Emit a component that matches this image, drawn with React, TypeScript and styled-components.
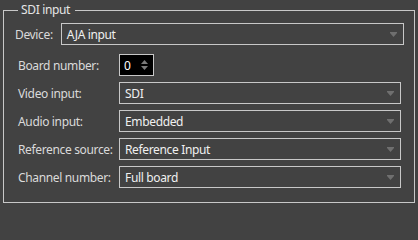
import React from 'react'
import styled, {createGlobalStyle} from 'styled-components'

const GlobalStyle = createGlobalStyle`
    html, body {
        margin: 0;
        padding: 0;
        background: #424242;
        overflow: hidden;
    }
    body {
        font-family: "Noto Sans", "Open Sans", sans-serif;
        font-size: 12px;
        letter-spacing: -0.35px;
        color: #dcdcdc;
    }
`

const Page = styled.div`
    width: 418px;
    height: 205px;
    padding: 2px 3px 0 3px;
    box-sizing: border-box;
`

const Group = styled.fieldset`
    margin: 0;
    padding: 5px 10px 12px 11px;
    height: 201px;
    box-sizing: border-box;
    border: 1px solid #c8c8c8;
    min-width: 0;
`

const Legend = styled.legend`
    padding: 0 5px 0 3px;
    margin-left: 3px;
    line-height: 16px;
    color: #e6e6e6;
`

const TopRow = styled.div`
    display: flex;
    align-items: center;
    gap: 8px;
    margin-bottom: 9px;
`

const Form = styled.div`
    display: grid;
    grid-template-columns: 95px 1fr;
    column-gap: 6px;
    row-gap: 6px;
    margin: 0 3px;
    align-items: center;
`

const Label = styled.span`
    white-space: nowrap;
    color: #dadada;
`

const ComboBox = styled.div`
    flex: 1;
    display: flex;
    align-items: center;
    justify-content: space-between;
    height: 22px;
    box-sizing: border-box;
    border: 1px solid #c8c8c8;
    padding: 0 6px 0 5px;
    color: #f0f0f0;
`

const SpinBox = styled.div`
    display: flex;
    align-items: center;
    justify-content: space-between;
    width: 35px;
    height: 22px;
    box-sizing: border-box;
    border: 1px solid #c8c8c8;
    background: #000;
    color: #ffffff;
    padding: 0 5px 0 4px;
`

const Arrows = styled.div`
    display: flex;
    flex-direction: column;
    gap: 2px;
`

function DropArrow() {
    return (
        <svg width="7" height="5" viewBox="0 0 7 5">
            <path d="M0 0H7V1L3.5 5L0 1Z" fill="#6f6f6f" />
        </svg>
    )
}

function Combo({value}: {value: string}) {
    return (
        <ComboBox>
            <span>{value}</span>
            <DropArrow />
        </ComboBox>
    )
}

function Spin({value}: {value: number}) {
    return (
        <SpinBox>
            <span>{value}</span>
            <Arrows>
                <svg width="7" height="4" viewBox="0 0 7 4">
                    <path d="M3.5 0L7 4H0Z" fill="#7a7a7a" />
                </svg>
                <svg width="7" height="4" viewBox="0 0 7 4">
                    <path d="M0 0H7L3.5 4Z" fill="#7a7a7a" />
                </svg>
            </Arrows>
        </SpinBox>
    )
}

const rows = [
    {label: 'Video input:', value: 'SDI'},
    {label: 'Audio input:', value: 'Embedded'},
    {label: 'Reference source:', value: 'Reference Input'},
    {label: 'Channel number:', value: 'Full board'},
]

export default function App() {
    return (
        <Page>
            <GlobalStyle />
            <Group>
                <Legend>SDI input</Legend>
                <TopRow>
                    <Label>Device:</Label>
                    <Combo value="AJA input" />
                </TopRow>
                <Form>
                    <Label>Board number:</Label>
                    <div>
                        <Spin value={0} />
                    </div>
                    {rows.map((r) => (
                        <React.Fragment key={r.label}>
                            <Label>{r.label}</Label>
                            <Combo value={r.value} />
                        </React.Fragment>
                    ))}
                </Form>
            </Group>
        </Page>
    )
}
